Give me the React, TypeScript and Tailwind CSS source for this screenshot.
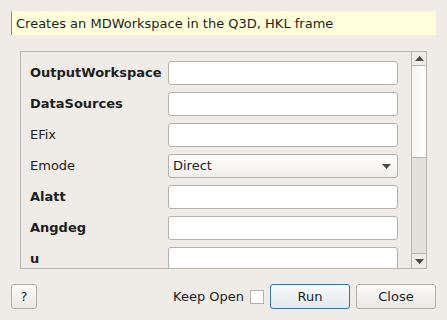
import React from 'react'

interface Prop {
  name: string
  bold: boolean
  combo?: string
}

const props: Prop[] = [
  { name: 'OutputWorkspace', bold: true },
  { name: 'DataSources', bold: true },
  { name: 'EFix', bold: false },
  { name: 'Emode', bold: false, combo: 'Direct' },
  { name: 'Alatt', bold: true },
  { name: 'Angdeg', bold: true },
  { name: 'u', bold: true },
  { name: 'v', bold: true },
]

function Arrow({ up }: { up?: boolean }) {
  return (
    <svg width="9" height="5" viewBox="0 0 9 5" className="block">
      {up ? <path d="M0 5 L4.5 0 L9 5 Z" fill="#4a4a4a" /> : <path d="M0 0 L9 0 L4.5 5 Z" fill="#4a4a4a" />}
    </svg>
  )
}

export default function App() {
  return (
    <div
      className="w-[447px] h-[320px] bg-[#efebe7] text-[13px] text-[#1e1e1e] flex flex-col px-[11px] pt-[11px] overflow-hidden"
      style={{ fontFamily: '"DejaVu Sans", sans-serif' }}
    >
      {/* description */}
      <div className="h-[24px] bg-[#ffffdc] border-l border-t border-[#a0a09a] border-l-[#8a8a86] border-t-[#f4f4e8] flex items-center pl-[4px]">
        Creates an MDWorkspace in the Q3D, HKL frame
      </div>

      {/* properties */}
      <div className="mt-[16px] mx-[9px] h-[218px] border border-[#b8b4ae] flex overflow-hidden">
        <div className="flex-1 pl-[9px] pr-[13px] pt-[9px] flex flex-col gap-[7px]">
          {props.map((p) => (
            <div key={p.name} className="flex items-center h-[24px] shrink-0">
              <div className={`w-[138px] ${p.bold ? 'font-bold' : ''}`}>{p.name}</div>
              {p.combo ? (
                <div className="w-[230px] h-[24px] rounded-[3px] border border-[#b3afaa] bg-gradient-to-b from-[#ffffff] to-[#f1efec] flex items-center justify-between pl-[4px] pr-[6px]">
                  <span>{p.combo}</span>
                  <Arrow />
                </div>
              ) : (
                <div className="w-[230px] h-[24px] rounded-[3px] border border-[#b3afaa] bg-white" />
              )}
            </div>
          ))}
        </div>
        <div className="w-[15px] border-l border-[#b8b4ae] flex flex-col">
          <div className="h-[14px] border-b border-[#b8b4ae] flex items-center justify-center bg-[#efebe7]">
            <Arrow up />
          </div>
          <div className="h-[92px] border-b border-[#b8b4ae] bg-gradient-to-r from-[#f6f5f3] to-[#ffffff]" />
          <div className="flex-1 bg-[#e2e0dd]" />
          <div className="h-[15px] border-t border-[#b8b4ae] flex items-center justify-center bg-[#efebe7]">
            <Arrow />
          </div>
        </div>
      </div>

      {/* buttons */}
      <div className="mt-[15px] flex items-center h-[25px]">
        <button className="w-[26px] h-[25px] p-0 flex items-center justify-center rounded-[3px] border border-[#b0aca6] bg-gradient-to-b from-[#fbfaf9] to-[#ebe8e4] text-[13px]">
          ?
        </button>
        <div className="flex-1" />
        <span className="mr-[6px]">Keep Open</span>
        <div className="w-[14px] h-[14px] border border-[#b3afaa] bg-white mr-[6px]" />
        <button className="w-[80px] h-[25px] rounded-[3px] border border-[#3774a8] bg-gradient-to-b from-[#f8f9fa] to-[#e3e8ec]">
          Run
        </button>
        <button className="ml-[6px] w-[80px] h-[25px] rounded-[3px] border border-[#b0aca6] bg-gradient-to-b from-[#fbfaf9] to-[#ebe8e4]">
          Close
        </button>
      </div>
    </div>
  )
}
